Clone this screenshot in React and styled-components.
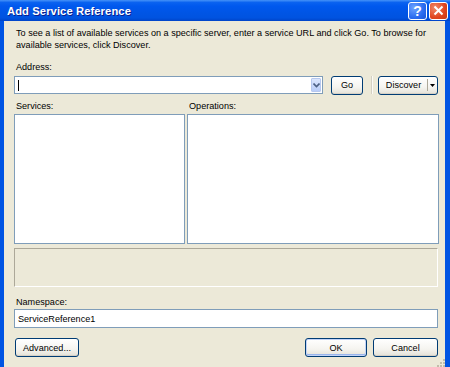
import React from 'react'
import styled, { createGlobalStyle } from 'styled-components'

const Global = createGlobalStyle`
	html, body {
		margin: 0;
		padding: 0;
		background: #ece9d8;
	}
	* {
		box-sizing: border-box;
	}
`

const Window = styled.div`
	width: 450px;
	height: 367px;
	display: flex;
	flex-direction: column;
	background: #0054e3;
	font-family: 'Liberation Sans', Arial, sans-serif;
	font-size: 9.1px;
	color: #000;
	overflow: hidden;
`

const TitleBar = styled.div`
	height: 21px;
	flex: none;
	display: flex;
	align-items: center;
	padding: 0 2px 0 7px;
	background: linear-gradient(
		to bottom,
		#4592f8 0%,
		#0a62f0 12%,
		#0058ee 30%,
		#0055e5 60%,
		#0053e0 85%,
		#0044c8 100%
	);
`

const Title = styled.div`
	flex: 1;
	color: #fff;
	font-family: 'Liberation Sans', Arial, sans-serif;
	font-weight: bold;
	font-size: 11.2px;
	letter-spacing: 0.1px;
	padding-top: 1px;
	text-shadow: 1px 1px 0 #0a1e8c;
`

const Controls = styled.div`
	display: flex;
	gap: 2px;
`

const CaptionButton = styled.div`
	width: 19px;
	height: 18px;
	border: 1px solid #fff;
	border-radius: 3px;
	display: flex;
	align-items: center;
	justify-content: center;
	color: #fff;
	font-weight: bold;
	font-size: 14px;
	background: ${p =>
		p.close
			? 'radial-gradient(circle at 30% 30%, #f08a6a, #e0451f 60%, #c63a14)'
			: 'radial-gradient(circle at 30% 30%, #6ea4ff, #2a6cf0 60%, #1a56d8)'};
`

const Client = styled.div`
	flex: 1;
	position: relative;
	margin: 0 5px 0 4px;
	background: #ece9d8;
	padding: 6px 7px 0 10px;
	display: flex;
	flex-direction: column;
`

const Intro = styled.div`
	line-height: 12px;
	padding-left: 2px;
`

const Label = styled.div`
	line-height: 12px;
	height: 12px;
	margin-top: ${p => p.top || 0}px;
	margin-bottom: ${p => p.bottom || 0}px;
	padding-left: ${p => p.indent || 2}px;
`

const AddressRow = styled.div`
	display: flex;
	align-items: center;
	height: 18px;
`

const Combo = styled.div`
	width: 310px;
	height: 18px;
	border: 1px solid #7f9db9;
	background: #fff;
	display: flex;
	align-items: stretch;
	padding: 1px;
`

const Caret = styled.div`
	flex: 1;
	position: relative;
	&::before {
		content: '';
		position: absolute;
		left: 2px;
		top: 2px;
		width: 1px;
		height: 11px;
		background: #000;
	}
`

const ComboArrow = styled.div`
	width: 10px;
	background: linear-gradient(to bottom, #dbe6fd, #b9cdf8);
	border: 1px solid #b6c8ef;
	border-radius: 1px;
	display: flex;
	align-items: center;
	justify-content: center;
`

const Button = styled.div`
	width: ${p => p.w}px;
	height: ${p => p.h || 19}px;
	flex: none;
	border: 1px solid #003c74;
	border-radius: 3px;
	background: linear-gradient(to bottom, #ffffff 0%, #f5f4ef 60%, #e3e1d7 100%);
	box-shadow: ${p =>
		p.primary
			? 'inset 0 0 0 1px #c2d3f7, inset 0 -1px 0 1px #99b5ec'
			: 'inset 0 -1px 0 #d6d0c5'};
	display: flex;
	align-items: center;
	justify-content: center;
	margin-left: ${p => p.left || 0}px;
`

const Separator = styled.div`
	width: 2px;
	height: 18px;
	margin: 0 5px 0 8px;
	border-left: 1px solid #d4d0c3;
	border-right: 1px solid #fbfaf6;
`

const SplitButton = styled(Button)`
	justify-content: flex-start;
	padding: 0;
`

const SplitLabel = styled.div`
	flex: 1;
	text-align: center;
	padding-left: 1px;
`

const SplitArrow = styled.div`
	width: 10px;
	height: 12px;
	border-left: 1px solid #aca899;
	display: flex;
	align-items: center;
	justify-content: center;
`

const Lists = styled.div`
	display: grid;
	grid-template-columns: 171px 252px;
	gap: 2px;
	margin-top: 6px;
`

const Column = styled.div`
	display: flex;
	flex-direction: column;
`

const ListBox = styled.div`
	height: 130px;
	margin-top: 2px;
	border: 1px solid #7f9db9;
	background: #fff;
`

const StatusBox = styled.div`
	height: 39px;
	margin-top: 4px;
	border: 1px solid;
	border-color: #aca899 #fff #fff #aca899;
	background: #ece9d8;
`

const TextInput = styled.div`
	height: 19px;
	margin-top: 1px;
	border: 1px solid #7f9db9;
	background: #fff;
	padding: 0 3px;
	display: flex;
	align-items: center;
`

const ButtonRow = styled.div`
	display: flex;
	margin-top: 10px;
	padding-left: 1px;
`

const Spacer = styled.div`
	flex: 1;
`

const Grip = styled.svg`
	position: absolute;
	right: 0;
	bottom: 0;
`

const Chevron = () => (
	<svg width="7" height="5" viewBox="0 0 7 5">
		<path d="M0.5 0.5 L3.5 3.5 L6.5 0.5" fill="none" stroke="#4d6185" strokeWidth="1.6" />
	</svg>
)

const DownTriangle = () => (
	<svg width="5" height="3" viewBox="0 0 5 3">
		<path d="M0 0 H5 L2.5 3 Z" fill="#000" />
	</svg>
)

const App = () => (
	<>
		<Global />
		<Window>
			<TitleBar>
				<Title>Add Service Reference</Title>
				<Controls>
					<CaptionButton>?</CaptionButton>
					<CaptionButton close>
						<svg width="11" height="11" viewBox="0 0 11 11">
							<path d="M1.5 1.5 L9.5 9.5 M9.5 1.5 L1.5 9.5" stroke="#fff" strokeWidth="2" />
						</svg>
					</CaptionButton>
				</Controls>
			</TitleBar>
			<Client>
				<Intro>
					To see a list of available services on a specific server, enter a service URL and click Go. To browse for
					available services, click Discover.
				</Intro>
				<Label top={10} bottom={3}>Address:</Label>
				<AddressRow>
					<Combo>
						<Caret />
						<ComboArrow>
							<Chevron />
						</ComboArrow>
					</Combo>
					<Button w={32} left={8}>Go</Button>
					<Separator />
					<SplitButton w={60}>
						<SplitLabel>Discover</SplitLabel>
						<SplitArrow>
							<DownTriangle />
						</SplitArrow>
					</SplitButton>
				</AddressRow>
				<Lists>
					<Column>
						<Label>Services:</Label>
						<ListBox />
					</Column>
					<Column>
						<Label>Operations:</Label>
						<ListBox />
					</Column>
				</Lists>
				<StatusBox />
				<Label top={9}>Namespace:</Label>
				<TextInput>ServiceReference1</TextInput>
				<ButtonRow>
					<Button w={64}>Advanced...</Button>
					<Spacer />
					<Button w={62} primary>OK</Button>
					<Button w={65} left={6}>Cancel</Button>
				</ButtonRow>
				<Grip width="8" height="8" viewBox="0 0 8 8">
					<rect x="6" y="0" width="2" height="2" fill="#c1bdaa" />
					<rect x="3" y="3" width="2" height="2" fill="#c1bdaa" />
					<rect x="6" y="3" width="2" height="2" fill="#c1bdaa" />
					<rect x="0" y="6" width="2" height="2" fill="#c1bdaa" />
					<rect x="3" y="6" width="2" height="2" fill="#c1bdaa" />
					<rect x="6" y="6" width="2" height="2" fill="#c1bdaa" />
				</Grip>
			</Client>
		</Window>
	</>
)

export default App
